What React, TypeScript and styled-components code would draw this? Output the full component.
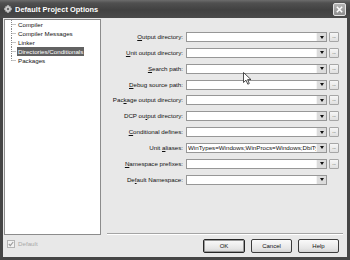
import React from "react";
import styled, { createGlobalStyle } from "styled-components";

const Global = createGlobalStyle`
  html, body { margin: 0; padding: 0; background: #e8e8e8; }
  * { box-sizing: border-box; }
`;

const Window = styled.div`
  position: relative;
  width: 350px;
  height: 260px;
  display: flex;
  flex-direction: column;
  background: #454545;
  font-family: "Liberation Sans", Arial, sans-serif;
  font-size: 6.2px;
  color: #111;
  overflow: hidden;
`;

const TitleBar = styled.div`
  height: 18px;
  flex: none;
  display: flex;
  align-items: center;
  padding: 0 4px 0 4px;
  background: linear-gradient(#6c6c6c 0px, #505050 3px, #414141 10px, #4a4a4a 18px);
`;

const TitleText = styled.span`
  flex: 1;
  margin-left: 3px;
  color: #fff;
  font-weight: bold;
  font-size: 7.4px;
  letter-spacing: 0.05px;
`;

const CloseButton = styled.div`
  width: 13px;
  height: 13px;
  border: 1px solid #e4e4e4;
  border-radius: 2px;
  background: linear-gradient(#b4b4b4, #8e8e8e);
  display: flex;
  align-items: center;
  justify-content: center;
`;

const Body = styled.div`
  flex: 1;
  margin: 0 3px 3px 3px;
  background: #e8e8e8;
  display: grid;
  grid-template-columns: 97px 1fr;
  grid-template-rows: 1fr 22px;
  padding: 1px 0 0 1px;
`;

const Tree = styled.div`
  background: #fff;
  border: 1px solid #8c8c8c;
  display: flex;
  flex-direction: column;
`;

const TreeRow = styled.div`
  height: 9px;
  display: flex;
  align-items: center;
`;

const TreeLabel = styled.span<{ $selected?: boolean }>`
  line-height: 9px;
  padding: 0 1px;
  white-space: nowrap;
  background: ${(p) => (p.$selected ? "#626262" : "transparent")};
  color: ${(p) => (p.$selected ? "#fff" : "#111")};
`;

const FormArea = styled.div`
  margin: 0 4px 1px 6px;
  border-bottom: 1px solid #a4a4a4;
  box-shadow: 0 1px 0 #fff;
  padding-top: 13px;
`;

const FormGrid = styled.div`
  display: grid;
  grid-template-columns: 1fr 141px 10px;
  grid-auto-rows: 10px;
  column-gap: 2px;
  row-gap: 5.85px;
  margin-left: -6px;
  margin-right: 4px;
`;

const Label = styled.label`
  text-align: right;
  white-space: nowrap;
  line-height: 10px;
  padding-right: 1px;
  u { text-decoration: underline; text-underline-offset: 0.5px; }
`;

const Combo = styled.div`
  height: 10px;
  border: 1px solid #979797;
  background: #fff;
  display: flex;
  align-items: stretch;
  padding: 0 0 0 1px;
  overflow: hidden;
`;

const ComboText = styled.span`
  flex: 1;
  min-width: 0;
  line-height: 8px;
  white-space: nowrap;
  overflow: hidden;
  text-overflow: clip;
`;

const DropButton = styled.div`
  width: 10px;
  flex: none;
  background: #dcdcdc;
  border-left: 1px solid #f4f4f4;
  display: flex;
  align-items: center;
  justify-content: center;
`;

const Arrow = styled.div`
  width: 0;
  height: 0;
  border-left: 2.5px solid transparent;
  border-right: 2.5px solid transparent;
  border-top: 3px solid #111;
`;

const EllipsisButton = styled.div`
  height: 10px;
  border: 1px solid #a6a6a6;
  border-radius: 1px;
  background: linear-gradient(#f6f6f6, #e0e0e0);
  font-size: 5px;
  line-height: 6px;
  text-align: center;
  color: #333;
  letter-spacing: -0.3px;
`;

const CheckCell = styled.div`
  display: flex;
  align-items: flex-start;
  padding: 5px 0 0 3px;
  color: #a8a8a8;
  gap: 3px;
`;

const CheckBox = styled.div`
  width: 8px;
  height: 8px;
  border: 1px solid #b4b4b4;
  background: #f2f2f2;
  display: flex;
  align-items: center;
  justify-content: center;
`;

const CheckText = styled.span`
  line-height: 8px;
`;

const ButtonRow = styled.div`
  display: flex;
  justify-content: flex-end;
  align-items: flex-start;
  gap: 6px;
  padding: 4px 8px 0 0;
`;

const Button = styled.div<{ $default?: boolean; $w: number }>`
  width: ${(p) => p.$w}px;
  height: 14px;
  border: ${(p) => (p.$default ? "1.5px solid #262626" : "1px solid #3c3c3c")};
  border-radius: 2px;
  background: linear-gradient(#fafafa, #e6e6e6 70%, #d4d4d4);
  box-shadow: ${(p) => (p.$default ? "inset 0 0 0 1px #9a9a9a" : "none")};
  display: flex;
  align-items: center;
  justify-content: center;
  font-size: 6px;
`;

const Cursor = styled.svg`
  position: absolute;
  left: 243px;
  top: 72px;
`;

const Connector = ({ last }: { last?: boolean }) => (
  <svg width="12" height="9" style={{ flex: "none" }}>
    <line x1="6.5" y1="0" x2="6.5" y2={last ? 4.5 : 9} stroke="#8a8a8a" strokeWidth="1" strokeDasharray="1 1" />
    <line x1="6.5" y1="4.5" x2="11" y2="4.5" stroke="#8a8a8a" strokeWidth="1" strokeDasharray="1 1" />
  </svg>
);

const treeItems = ["Compiler", "Compiler Messages", "Linker", "Directories/Conditionals", "Packages"];

type Row = { pre: string; key: string; post: string; value?: string; noButton?: boolean };

const rows: Row[] = [
  { pre: "", key: "O", post: "utput directory:" },
  { pre: "", key: "U", post: "nit output directory:" },
  { pre: "", key: "S", post: "earch path:" },
  { pre: "", key: "D", post: "ebug source path:" },
  { pre: "Pac", key: "k", post: "age output directory:" },
  { pre: "DCP ou", key: "t", post: "put directory:" },
  { pre: "", key: "C", post: "onditional defines:" },
  { pre: "Unit ", key: "a", post: "liases:", value: "WinTypes=Windows;WinProcs=Windows;DbiTypes=BDE" },
  { pre: "", key: "N", post: "amespace prefixes:" },
  { pre: "De", key: "f", post: "ault Namespace:", noButton: true },
];

export default function App() {
  return (
    <>
      <Global />
      <Window>
        <TitleBar>
          <svg width="8" height="8" viewBox="0 0 8 8">
            <circle cx="4" cy="4" r="3.2" fill="#cfcfcf" stroke="#8a8a8a" strokeWidth="0.8" />
            <circle cx="4" cy="4" r="1.2" fill="#6a6a6a" />
            <path d="M4 0.2v1.4M4 6.4v1.4M0.2 4h1.4M6.4 4h1.4" stroke="#e6e6e6" strokeWidth="1" />
          </svg>
          <TitleText>Default Project Options</TitleText>
          <CloseButton>
            <svg width="7" height="7" viewBox="0 0 7 7">
              <path d="M0.8 0.8L6.2 6.2M6.2 0.8L0.8 6.2" stroke="#fff" strokeWidth="1.5" />
            </svg>
          </CloseButton>
        </TitleBar>
        <Body>
          <Tree>
            {treeItems.map((t, i) => (
              <TreeRow key={t}>
                <Connector last={i === treeItems.length - 1} />
                <TreeLabel $selected={t === "Directories/Conditionals"}>{t}</TreeLabel>
              </TreeRow>
            ))}
          </Tree>
          <FormArea>
            <FormGrid>
              {rows.map((r) => (
                <React.Fragment key={r.pre + r.key + r.post}>
                  <Label>
                    {r.pre}
                    <u>{r.key}</u>
                    {r.post}
                  </Label>
                  <Combo>
                    <ComboText>{r.value ?? ""}</ComboText>
                    <DropButton>
                      <Arrow />
                    </DropButton>
                  </Combo>
                  {r.noButton ? <span /> : <EllipsisButton>...</EllipsisButton>}
                </React.Fragment>
              ))}
            </FormGrid>
          </FormArea>
          <CheckCell>
            <CheckBox>
              <svg width="6" height="6" viewBox="0 0 6 6">
                <path d="M0.8 3L2.3 4.6L5.2 1" stroke="#9a9a9a" strokeWidth="1.1" fill="none" />
              </svg>
            </CheckBox>
            <CheckText>Default</CheckText>
          </CheckCell>
          <ButtonRow>
            <Button $default $w={42}>OK</Button>
            <Button $w={41}>Cancel</Button>
            <Button $w={41}>Help</Button>
          </ButtonRow>
        </Body>
        <Cursor width="9" height="13" viewBox="0 0 9 13">
          <path d="M0.5 0.5V10.5L3 8.2L4.8 12.2L6.3 11.5L4.6 7.6H8L0.5 0.5Z" fill="#fff" stroke="#222" strokeWidth="0.8" />
        </Cursor>
      </Window>
    </>
  );
}
